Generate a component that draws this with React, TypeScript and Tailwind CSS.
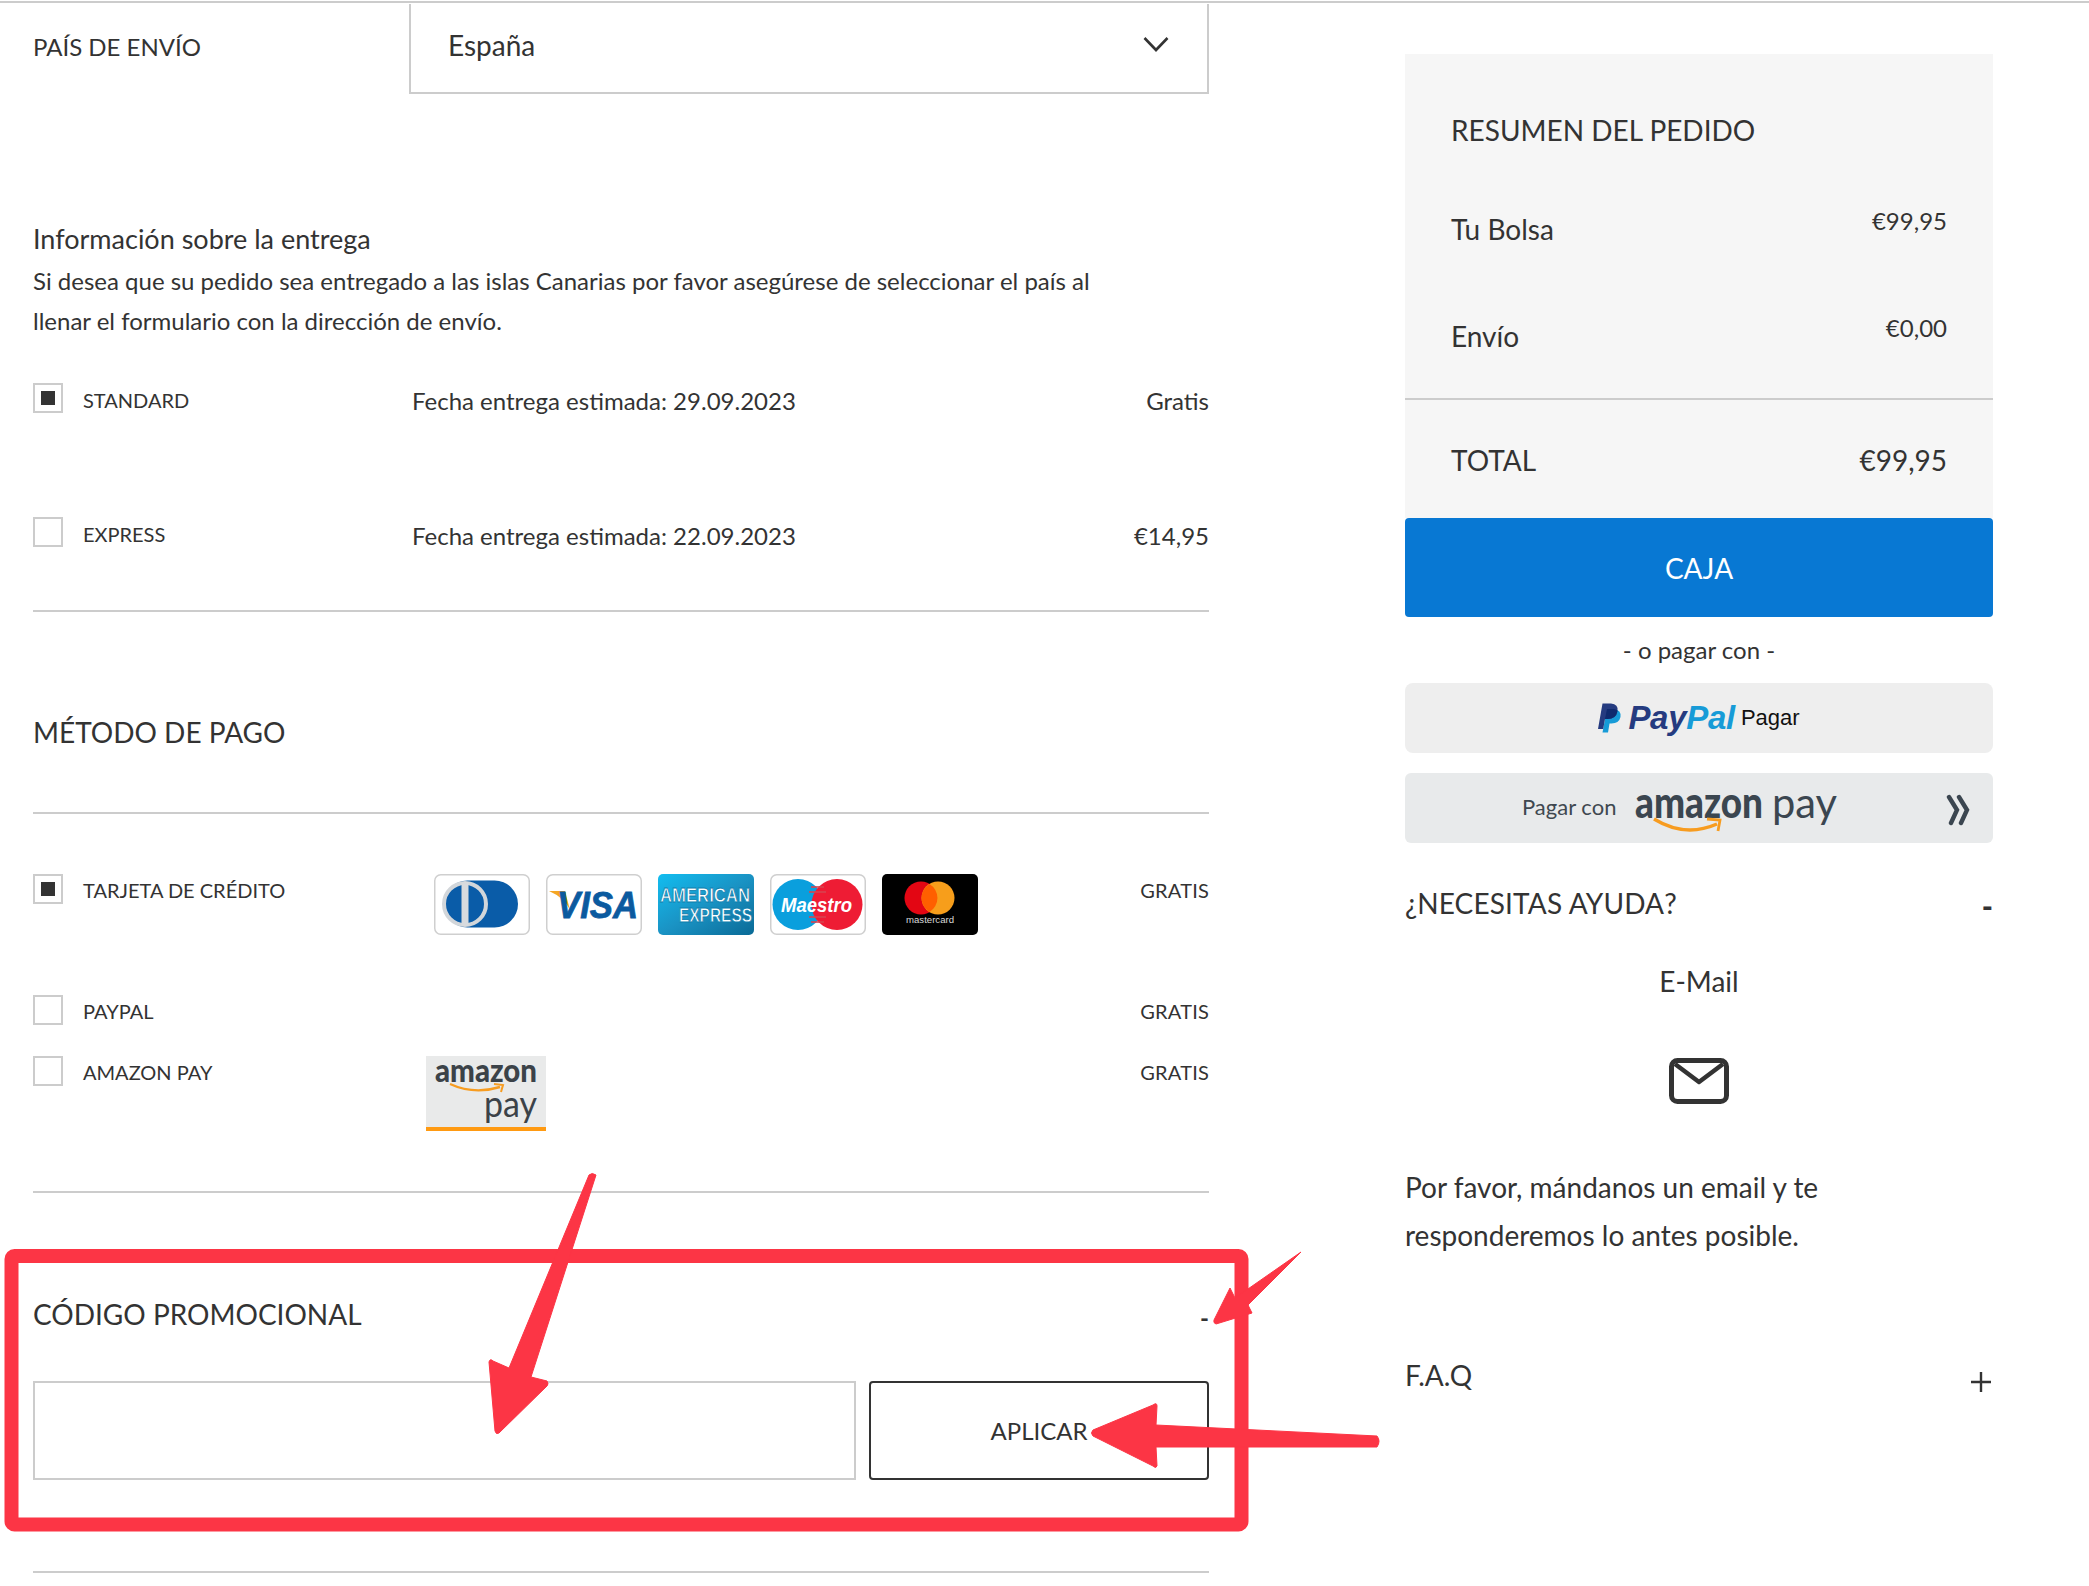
import React from "react";

const Check = ({ on = false }: { on?: boolean }) => (
  <div className="w-[30px] h-[30px] shrink-0 border-2 border-[#cccccc] bg-white flex items-center justify-center">
    {on && <div className="w-[14px] h-[14px] bg-[#333333]" />}
  </div>
);

const Divider = ({ className = "" }: { className?: string }) => <div className={`h-[2px] bg-[#cccccc] ${className}`} />;

const ShipRow = ({ on, name, date, price, className = "", textClass = "" }: { on?: boolean; name: string; date: string; price: string; className?: string; textClass?: string }) => (
  <div className={`flex items-start ${className}`}>
    <Check on={on} />
    <div className="w-[349px] pl-[20px] text-[20px] leading-[30px] pt-[2px]">{name}</div>
    <div className={`flex-1 text-[24px] leading-[36px] ${textClass}`}>{date}</div>
    <div className={`text-[24px] leading-[36px] ${textClass}`}>{price}</div>
  </div>
);

const PayRow = ({ on, name, className = "", children }: { on?: boolean; name: string; className?: string; children?: React.ReactNode }) => (
  <div className={`flex items-start relative ${className}`}>
    <Check on={on} />
    <div className="w-[371px] pl-[20px] text-[20px] leading-[30px] pt-[1px]">{name}</div>
    <div className="flex-1">{children}</div>
    <div className="text-[20px] leading-[30px] pt-[1px] tracking-[0.2px]">GRATIS</div>
  </div>
);

const CardFrame = ({ children, className = "" }: { children: React.ReactNode; className?: string }) => (
  <svg viewBox="0 0 96 61" className={`w-[96px] h-[61px] ${className}`}>{children}</svg>
);

const cardFont = "'Liberation Sans', sans-serif";

const Cards = () => (
  <div className="flex gap-[16px]">
    <CardFrame>
      <rect x="0.75" y="0.75" width="94.5" height="59.5" rx="6" fill="#fff" stroke="#cfcfcf" strokeWidth="1.5" />
      <rect x="10" y="6.5" width="74" height="47" rx="23.5" fill="#0a5ca8" />
      <circle cx="31" cy="30" r="21" fill="#0a5ca8" stroke="#d2d6da" strokeWidth="4" />
      <rect x="27.5" y="8" width="7" height="44" fill="#d8dbde" />
    </CardFrame>
    <CardFrame>
      <rect x="0.75" y="0.75" width="94.5" height="59.5" rx="6" fill="#fff" stroke="#cfcfcf" strokeWidth="1.5" />
      <path d="M3 17 H19 L24 36 Q19 24 3 17Z" fill="#f5a623" />
      <text x="11" y="44" fontFamily={cardFont} fontWeight="700" fontStyle="italic" fontSize="37" textLength="81" lengthAdjust="spacingAndGlyphs" fill="#0b5a9f" stroke="#0b5a9f" strokeWidth="0.8">VISA</text>
    </CardFrame>
    <CardFrame>
      <defs>
        <linearGradient id="amexg" x1="0" y1="0" x2="1" y2="1">
          <stop offset="0" stopColor="#12bdf0" />
          <stop offset="0.5" stopColor="#1a93c4" />
          <stop offset="1" stopColor="#0a6a96" />
        </linearGradient>
      </defs>
      <rect x="0" y="0" width="96" height="61" rx="5" fill="url(#amexg)" />
      <text x="2" y="28" fontFamily={cardFont} fontWeight="700" fontSize="20" textLength="90" lengthAdjust="spacingAndGlyphs" fill="#fff" stroke="#0f7fae" strokeWidth="0.8">AMERICAN</text>
      <text x="21" y="48" fontFamily={cardFont} fontWeight="700" fontSize="20" textLength="73" lengthAdjust="spacingAndGlyphs" fill="#fff" stroke="#0f7fae" strokeWidth="0.8">EXPRESS</text>
    </CardFrame>
    <CardFrame>
      <rect x="0.75" y="0.75" width="94.5" height="59.5" rx="6" fill="#fff" stroke="#cfcfcf" strokeWidth="1.5" />
      <circle cx="28" cy="30.5" r="25.5" fill="#0a9fdd" />
      <circle cx="67" cy="30.5" r="25.5" fill="#ee1c34" />
      <g stroke="#d7434f" strokeWidth="1.6">
        <line x1="41" y1="13" x2="54" y2="13" /><line x1="39" y1="18" x2="56" y2="18" /><line x1="39" y1="43" x2="56" y2="43" /><line x1="41" y1="48" x2="54" y2="48" />
      </g>
      <text x="11" y="38" fontFamily={cardFont} fontWeight="700" fontStyle="italic" fontSize="21" textLength="71" lengthAdjust="spacingAndGlyphs" fill="#fff">Maestro</text>
    </CardFrame>
    <CardFrame>
      <rect x="0" y="0" width="96" height="61" rx="5" fill="#000" />
      <circle cx="39" cy="24" r="16.5" fill="#e30613" />
      <circle cx="56" cy="24" r="16.5" fill="#f79e1b" />
      <path d="M47.5 9.9 A16.5 16.5 0 0 1 47.5 38.1 A16.5 16.5 0 0 1 47.5 9.9Z" fill="#ff5f00" />
      <text x="24" y="49" fontFamily={cardFont} fontSize="9" textLength="48" lengthAdjust="spacingAndGlyphs" fill="#d8d8d8">mastercard</text>
    </CardFrame>
  </div>
);

const AmazonSmall = () => (
  <svg viewBox="0 0 120 75" className="w-[120px] h-[75px] -ml-[8px]">
    <rect width="120" height="75" fill="#e9eaea" />
    <rect y="71" width="120" height="4" fill="#ff9a12" />
    <text x="9" y="26" fontFamily="Lato, sans-serif" fontWeight="900" fontSize="33" textLength="102" lengthAdjust="spacingAndGlyphs" fill="#3b4248">amazon</text>
    <path d="M24 28 Q48 39 74 31" fill="none" stroke="#f79c20" strokeWidth="2.4" />
    <path d="M68 28 L77 29 L75 36" fill="none" stroke="#f79c20" strokeWidth="2" />
    <text x="58" y="61" fontFamily="Lato, sans-serif" fontSize="36" textLength="53" lengthAdjust="spacingAndGlyphs" fill="#3b4248">pay</text>
  </svg>
);

const AmazonBig = () => (
  <svg viewBox="0 0 206 60" className="w-[206px] h-[60px] ml-[19px] shrink-0">
    <text x="0" y="40" fontFamily="Lato, sans-serif" fontWeight="900" fontSize="43" textLength="128" lengthAdjust="spacingAndGlyphs" fill="#3b4650">amazon</text>
    <text x="137" y="40" fontFamily="Lato, sans-serif" fontSize="43" textLength="65" lengthAdjust="spacingAndGlyphs" fill="#3b4650">pay</text>
    <path d="M19 41 Q50 60 82 46" fill="none" stroke="#f79c20" strokeWidth="3.4" />
    <path d="M72 41 L85 42 L83 53" fill="none" stroke="#f79c20" strokeWidth="2.8" />
  </svg>
);

const PayPalMark = () => (
  <svg viewBox="0 0 24 30" className="w-[24px] h-[30px]">
    <path d="M9 6 H16 Q23.5 7 22.5 14 Q21 20.5 13.5 20.5 H11.5 L10 29.5 H4.5Z" fill="#179bd7" />
    <path d="M4.5 0.5 H13 Q20.5 1 19.5 8 Q18 16 9.5 16 H7 L5.2 26 H0Z" fill="#253b80" />
    <path d="M7 16 L9 6 H16 Q19 6.5 19.5 8 Q18 16 9.5 16Z" fill="#0f2a6e" />
  </svg>
);

const Annotations = () => (
  <svg className="absolute left-0 top-0 pointer-events-none" width="2089" height="1586" viewBox="0 0 2089 1586">
    <rect x="11.5" y="1256" width="1230" height="268.5" rx="3" fill="none" stroke="#fc3545" strokeWidth="14" />
    <path d="M589 1175 Q592 1172 596 1175 L531 1377 L547 1381 Q549 1384 547 1386 L499 1433 Q496 1435 495 1431 L489 1362 Q490 1358 493 1361 L509 1368Z" fill="#fc3545" stroke="#fc3545" strokeLinejoin="round" />
    <path d="M1301 1252 L1248 1305 L1252 1313 L1216 1324 Q1213 1323 1214 1320 L1230 1288 L1235 1298Z" fill="#fc3545" stroke="#fc3545" strokeLinejoin="round" />
    <path d="M1377 1436 Q1381 1441 1377 1447 L1156 1447 L1157 1466 Q1156 1469 1153 1466 L1093 1436 Q1090 1433 1093 1430 L1153 1405 Q1157 1402 1157 1406 L1156 1425Z" fill="#fc3545" stroke="#fc3545" strokeLinejoin="round" />
  </svg>
);

export default function App() {
  return (
    <div className="relative w-[2089px] h-[1586px] overflow-hidden bg-white text-[#333333] font-['Lato',sans-serif]">
      <div className="h-[3px] border-t-2 border-[#cccccc] mt-px" />
      <div className="flex items-start">
        <div className="w-[1176px] ml-[33px] shrink-0">
          <div className="flex items-start">
            <div className="w-[376px] text-[24px] leading-[36px] pt-[25px]">PAÍS DE ENVÍO</div>
            <div className="w-[800px] h-[90px] border-x-2 border-b-2 border-[#cccccc] pl-[37px] pr-[38px] flex items-start justify-between pt-[23px]">
              <span className="text-[28px] leading-[36px]">España</span>
              <svg viewBox="0 0 26 16" className="w-[26px] h-[16px] mt-[9px]"><path d="M1.5 2 L13 14 L24.5 2" fill="none" stroke="#333" strokeWidth="2.6" /></svg>
            </div>
          </div>
          <div className="text-[27px] leading-[40px] mt-[125px]">Información sobre la entrega</div>
          <div className="text-[24px] leading-[40px] mt-[2px]">Si desea que su pedido sea entregado a las islas Canarias por favor asegúrese de seleccionar el país al<br />llenar el formulario con la dirección de envío.</div>
          <ShipRow on name="STANDARD" date="Fecha entrega estimada: 29.09.2023" price="Gratis" className="mt-[42px]" />
          <ShipRow name="EXPRESS" date="Fecha entrega estimada: 22.09.2023" price="€14,95" className="mt-[98px]" textClass="pt-px" />
          <Divider className="mt-[56px]" />
          <div className="text-[28px] leading-[40px] mt-[100px]">MÉTODO DE PAGO</div>
          <Divider className="mt-[60px]" />
          <PayRow on name="TARJETA DE CRÉDITO" className="mt-[60px]"><Cards /></PayRow>
          <PayRow name="PAYPAL" className="mt-[60px]" />
          <PayRow name="AMAZON PAY" className="mt-[30px]"><AmazonSmall /></PayRow>
          <Divider className="mt-[60px]" />
          <div className="flex items-center justify-between mt-[97px]">
            <span className="text-[28px] leading-[40px]">CÓDIGO PROMOCIONAL</span>
            <span className="text-[24px] leading-[40px] pt-[8px] font-bold">-</span>
          </div>
          <div className="flex gap-[13px] mt-[43px]">
            <input className="w-[823px] h-[99px] border-2 border-[#cccccc] bg-white" />
            <button className="flex-1 h-[99px] border-2 border-[#333333] rounded-[4px] text-[24px] leading-[36px]">APLICAR</button>
          </div>
          <Divider className="mt-[91px]" />
        </div>
        <div className="w-[588px] ml-[196px] shrink-0 mt-[50px]">
          <div className="bg-[#f6f6f6] h-[464px] relative flex flex-col">
            <div className="text-[28px] leading-[40px] pl-[46px] pt-[56px]">RESUMEN DEL PEDIDO</div>
            <div className="flex justify-between items-start pl-[46px] pr-[46px] mt-[57px]">
              <span className="text-[28px] leading-[40px] mt-[2px]">Tu Bolsa</span>
              <span className="text-[24px] leading-[36px] -mt-[4px]">€99,95</span>
            </div>
            <div className="flex justify-between items-start pl-[46px] pr-[46px] mt-[65px]">
              <span className="text-[28px] leading-[40px] mt-[2px]">Envío</span>
              <span className="text-[24px] leading-[36px] -mt-[4px]">€0,00</span>
            </div>
            <Divider className="mt-[42px]" />
            <div className="flex justify-between items-center pl-[46px] pr-[46px] mt-[40px] text-[28px] leading-[40px]">
              <span>TOTAL</span><span>€99,95</span>
            </div>
          </div>
          <div className="h-[99px] bg-[#0878d3] rounded-[4px] text-white text-[28px] flex items-center justify-center">CAJA</div>
          <div className="text-center text-[24px] leading-[36px] mt-[15px]">- o pagar con -</div>
          <div className="mt-[15px] h-[70px] bg-[#eeeeee] rounded-[8px] flex items-center justify-center gap-[6px]">
            <PayPalMark />
            <span className="font-['Liberation_Sans',sans-serif] italic font-bold text-[33px] leading-[40px] text-[#253b80] tracking-[-0.3px]">Pay<span className="text-[#179bd7]">Pal</span></span>
            <span className="font-['Liberation_Sans',sans-serif] text-[22px] text-[#111111] font-medium -mt-[1px]">Pagar</span>
          </div>
          <div className="relative mt-[20px] h-[70px] bg-[#e8eaeb] rounded-[6px] flex items-center pl-[117px]">
            <span className="text-[22px] text-[#3f4850] -mt-[3px]">Pagar con</span>
            <AmazonBig />
            <svg viewBox="0 0 24 32" className="absolute right-[23px] top-[21px] w-[24px] h-[32px]"><path d="M3 3 L11 16 L5 29 M13 3 L21 16 L15 29" fill="none" stroke="#3b4650" strokeWidth="4.4" strokeLinecap="round" /></svg>
          </div>
          <div className="flex justify-between items-center mt-[37px]">
            <span className="text-[28px] leading-[40px] tracking-[0.15px]">¿NECESITAS AYUDA?</span>
            <span className="text-[30px] leading-[40px] font-black pt-[6px]">-</span>
          </div>
          <div className="text-center text-[28px] leading-[40px] mt-[35px]">E-Mail</div>
          <svg viewBox="0 0 60 46" className="block w-[60px] h-[46px] mx-auto mt-[57px]"><rect x="2.5" y="2.5" width="55" height="41" rx="6" fill="none" stroke="#333" strokeWidth="5" /><path d="M6 6 L30 24 L54 6" fill="none" stroke="#333" strokeWidth="4.5" strokeLinejoin="round" /></svg>
          <div className="text-[28px] leading-[48px] mt-[59px]">Por favor, mándanos un email y te<br />responderemos lo antes posible.</div>
          <div className="flex justify-between items-center mt-[96px]">
            <span className="text-[28px] leading-[40px]">F.A.Q</span>
            <svg viewBox="0 0 20 20" className="w-[20px] h-[20px] mt-[14px] mr-[2px]"><path d="M10 0 V20 M0 10 H20" stroke="#333" strokeWidth="2.4" /></svg>
          </div>
        </div>
      </div>
      <Annotations />
    </div>
  );
}
